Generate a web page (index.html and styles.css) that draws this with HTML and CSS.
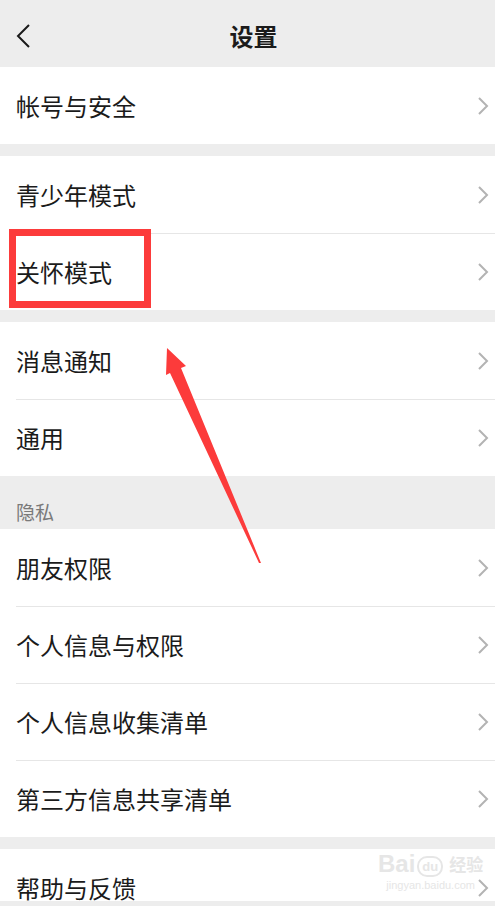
FILE: index.html
```html
<!DOCTYPE html>
<html lang="zh-CN">
<head>
    <meta charset="UTF-8">
    <meta name="viewport" content="width=device-width, initial-scale=1.0">
    <title>设置</title>
    <link rel="stylesheet" href="styles.css">
</head>
<body>
    <div class="page">
        <header class="nav">
            <span class="nav-back">
                <svg width="16" height="26" viewBox="0 0 16 26"><path d="M14 2 L3 13 L14 24" fill="none" stroke="#1a1a1a" stroke-width="2"/></svg>
            </span>
            <h1 class="nav-title">设置</h1>
            <span></span>
        </header>

        <section class="group">
            <div class="cell"><div class="cell-inner"><span>帐号与安全</span><svg class="chev" width="12" height="20" viewBox="0 0 12 20"><path d="M2 2 L10 10 L2 18" fill="none" stroke="#b3b3b3" stroke-width="2"/></svg></div></div>
        </section>

        <section class="group">
            <div class="cell"><div class="cell-inner"><span>青少年模式</span><svg class="chev" width="12" height="20" viewBox="0 0 12 20"><path d="M2 2 L10 10 L2 18" fill="none" stroke="#b3b3b3" stroke-width="2"/></svg></div></div>
            <div class="cell"><div class="cell-inner"><span>关怀模式</span><svg class="chev" width="12" height="20" viewBox="0 0 12 20"><path d="M2 2 L10 10 L2 18" fill="none" stroke="#b3b3b3" stroke-width="2"/></svg></div></div>
        </section>

        <section class="group">
            <div class="cell"><div class="cell-inner"><span>消息通知</span><svg class="chev" width="12" height="20" viewBox="0 0 12 20"><path d="M2 2 L10 10 L2 18" fill="none" stroke="#b3b3b3" stroke-width="2"/></svg></div></div>
            <div class="cell"><div class="cell-inner"><span>通用</span><svg class="chev" width="12" height="20" viewBox="0 0 12 20"><path d="M2 2 L10 10 L2 18" fill="none" stroke="#b3b3b3" stroke-width="2"/></svg></div></div>
        </section>

        <div class="group-label">隐私</div>
        <section class="group group-flush">
            <div class="cell"><div class="cell-inner"><span>朋友权限</span><svg class="chev" width="12" height="20" viewBox="0 0 12 20"><path d="M2 2 L10 10 L2 18" fill="none" stroke="#b3b3b3" stroke-width="2"/></svg></div></div>
            <div class="cell"><div class="cell-inner"><span>个人信息与权限</span><svg class="chev" width="12" height="20" viewBox="0 0 12 20"><path d="M2 2 L10 10 L2 18" fill="none" stroke="#b3b3b3" stroke-width="2"/></svg></div></div>
            <div class="cell"><div class="cell-inner"><span>个人信息收集清单</span><svg class="chev" width="12" height="20" viewBox="0 0 12 20"><path d="M2 2 L10 10 L2 18" fill="none" stroke="#b3b3b3" stroke-width="2"/></svg></div></div>
            <div class="cell"><div class="cell-inner"><span>第三方信息共享清单</span><svg class="chev" width="12" height="20" viewBox="0 0 12 20"><path d="M2 2 L10 10 L2 18" fill="none" stroke="#b3b3b3" stroke-width="2"/></svg></div></div>
        </section>

        <section class="group group-last">
            <div class="cell"><div class="cell-inner"><span>帮助与反馈</span><svg class="chev" width="12" height="20" viewBox="0 0 12 20"><path d="M2 2 L10 10 L2 18" fill="none" stroke="#b3b3b3" stroke-width="2"/></svg></div></div>
        </section>

        <!-- annotations drawn over the screenshot -->
        <div class="mark-box"></div>
        <svg class="mark-arrow" width="495" height="906" viewBox="0 0 495 906">
            <polygon points="167,348 186,366 181,368 261,563 259,563 170,373 166,375" fill="#fc3b3b"/>
        </svg>

        <div class="watermark">
            <div class="wm-logo"><span>Bai</span><span class="wm-paw">du</span><span class="wm-cn">经验</span></div>
            <div class="wm-url">jingyan.baidu.com</div>
        </div>
    </div>
</body>
</html>
```

FILE: styles.css
```css
html, body {
    margin: 0;
    padding: 0;
    height: 906px;
    overflow: hidden;
}
body {
    background-color: #ededed;
    font-family: "Noto Sans CJK SC", "Noto Sans", sans-serif;
    color: #1b1b1b;
}
.page {
    position: relative;
    width: 495px;
    height: 906px;
}
.nav {
    display: grid;
    grid-template-columns: 60px 1fr 48px;
    align-items: center;
    height: 63px;
    padding-top: 4px;
    background: #ededed;
}
.nav-back {
    display: flex;
    padding-left: 15px;
}
.nav-title {
    margin: 0;
    text-align: center;
    font-size: 24px;
    font-weight: 600;
    line-height: 1;
}
.group {
    background: #fff;
    margin-top: 12px;
}
.nav + .group {
    margin-top: 0;
}
.group-flush {
    margin-top: 0;
}
.cell {
    padding-left: 16px;
}
.cell-inner {
    display: flex;
    align-items: center;
    justify-content: space-between;
    height: 77px;
    box-sizing: border-box;
    padding-right: 6px;
    font-size: 24px;
    line-height: 24px;
}
.cell + .cell .cell-inner {
    border-top: 1px solid #e6e6e6;
}
.group-label {
    display: flex;
    align-items: flex-end;
    height: 53px;
    box-sizing: border-box;
    padding: 0 0 8px 16px;
    font-size: 19px;
    line-height: 19px;
    color: #7a7a7a;
}
/* the screenshot ends partway through the last row */
.group-last .cell-inner {
    height: 52px;
    align-items: flex-start;
    padding-top: 27px;
}
.group-last .chev {
    margin-top: 2px;
}
.mark-box {
    position: absolute;
    left: 9px;
    top: 229px;
    width: 128px;
    height: 65px;
    border: 7px solid #fc3b3b;
}
.mark-arrow {
    position: absolute;
    left: 0;
    top: 0;
    pointer-events: none;
}
.watermark {
    position: absolute;
    left: 378px;
    top: 851px;
    color: #e6e6e6;
    text-align: center;
}
.wm-logo {
    display: flex;
    align-items: flex-end;
    gap: 2px;
    font-family: "Liberation Sans", Arial, sans-serif;
    font-size: 24px;
    font-weight: bold;
    line-height: 26px;
}
.wm-paw {
    font-size: 13px;
    line-height: 17px;
    border: 2px solid #e6e6e6;
    border-radius: 10px;
    padding: 0 3px;
}
.wm-cn {
    font-family: "Noto Sans CJK SC", sans-serif;
    font-size: 17px;
    margin-left: 4px;
}
.wm-url {
    font-family: "Liberation Sans", Arial, sans-serif;
    font-size: 11px;
    line-height: 12px;
    margin-top: 2px;
}
```
